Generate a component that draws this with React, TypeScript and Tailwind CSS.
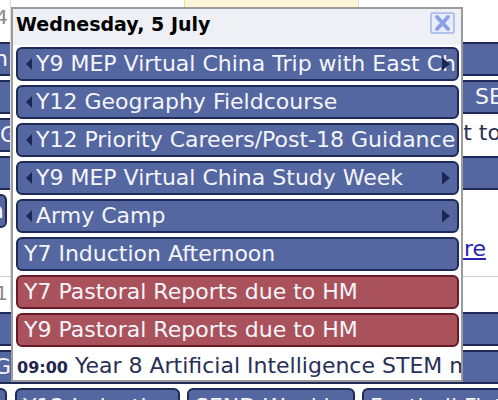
import React from "react";

type CalEvent = {
  title: string;
  tone: "blue" | "red";
  fromBefore?: boolean;
  goesAfter?: boolean;
};

const dayEvents: CalEvent[] = [
  { title: "Y9 MEP Virtual China Trip with East China", tone: "blue", fromBefore: true, goesAfter: true },
  { title: "Y12 Geography Fieldcourse", tone: "blue", fromBefore: true },
  { title: "Y12 Priority Careers/Post-18 Guidance", tone: "blue", fromBefore: true },
  { title: "Y9 MEP Virtual China Study Week", tone: "blue", fromBefore: true, goesAfter: true },
  { title: "Army Camp", tone: "blue", fromBefore: true, goesAfter: true },
  { title: "Y7 Induction Afternoon", tone: "blue" },
  { title: "Y7 Pastoral Reports due to HM", tone: "red" },
  { title: "Y9 Pastoral Reports due to HM", tone: "red" },
];

const blueBar =
  "h-[34px] border-2 border-[#1f2a58] bg-[#5567a1] text-[#f4f5fa] text-[22px] leading-[30px] overflow-hidden whitespace-nowrap flex items-center";

const EventBar: React.FC<{ ev: CalEvent }> = ({ ev }) => {
  const tone =
    ev.tone === "red"
      ? "bg-[#aa525c] border-[#6a1a27]"
      : "bg-[#5567a1] border-[#1f2a58]";
  return (
    <div
      className={`relative h-[34px] ml-[3px] mr-[2px] border-2 rounded-[6px] ${tone} flex items-center overflow-hidden whitespace-nowrap`}
    >
      {ev.fromBefore ? (
        <>
          <svg className="ml-[8px] shrink-0" width="6" height="12" viewBox="0 0 6 12">
            <path d="M6 0 L0 6 L6 12 Z" fill="#1c2653" />
          </svg>
          <span className="ml-[4px] text-[22px] leading-[30px] text-[#f4f5fa]">{ev.title}</span>
        </>
      ) : (
        <span className="ml-[6px] text-[22px] leading-[30px] text-[#f4f5fa]">{ev.title}</span>
      )}
      {ev.goesAfter && (
        <svg
          className="absolute right-[7px] top-1/2 -translate-y-1/2"
          width="8"
          height="13"
          viewBox="0 0 8 13"
        >
          <path d="M0 0 L8 6.5 L0 13 Z" fill="#1c2653" />
        </svg>
      )}
    </div>
  );
};

const DayPopup = () => (
  <div className="absolute left-[11px] top-[7px] w-[452px] h-[375px] border-2 border-[#9b9b9b] bg-white overflow-hidden">
    {/* header */}
    <div className="h-[36px] bg-[#eef0f5] flex items-start justify-between pl-[3px] pr-[6px]">
      <h2 className="pt-[4px] text-[19px] leading-[22px] font-bold text-black">
        Wednesday, 5 July
      </h2>
      <button className="mt-[3px] w-[25px] h-[22px]" aria-label="Close">
        <svg width="25" height="22" viewBox="0 0 25 22">
          <rect x="1" y="1" width="23" height="20" rx="1.5" fill="#e8edfb" stroke="#a3b5ea" strokeWidth="1.5" />
          <path d="M7 5 L18 17 M18 5 L7 17" stroke="#8aa1e4" strokeWidth="3.8" strokeLinecap="round" />
        </svg>
      </button>
    </div>

    <div className="flex flex-col gap-[4px] pt-[2px]">
      {dayEvents.map((ev) => (
        <EventBar key={ev.title} ev={ev} />
      ))}
    </div>

    <div className="mt-[4px] h-[30px] pl-[4px] flex items-baseline whitespace-nowrap overflow-hidden leading-[30px]">
      <span className="text-[16px] font-bold text-[#1f2650]">09:00</span>
      <span className="ml-[7px] text-[22px] text-[#283056]">Year 8 Artificial Intelligence STEM morning</span>
    </div>
  </div>
);

export default function App() {
  return (
    <div
      className="relative w-[498px] h-[400px] overflow-hidden bg-white"
      style={{ fontFamily: '"DejaVu Sans", Verdana, sans-serif' }}
    >
      {/* month grid behind the popup */}
      <div className="ml-[-164px] w-[870px]">
        {/* week 1 */}
        <div className="grid grid-cols-[repeat(5,174px)] h-[277px] border-b border-[#cfcfcf]">
          <div className="flex flex-col">
            <div className="h-[40px] pt-[5px] pr-[2px] text-right text-[20px] leading-[24px] text-[#8a8a8a]">4</div>
            <div className="flex flex-col gap-[4px] pt-[2px]">
              <div className={`${blueBar} justify-end pr-[2px] rounded-l-[6px] border-r-0`}>Trip with East Ch</div>
              <div className={`${blueBar} rounded-l-[6px] border-r-0`}></div>
              <div className={`${blueBar} justify-end rounded-l-[6px] border-r-0 -mr-[7px]`}>Careers G</div>
              <div className={`${blueBar} rounded-l-[6px] border-r-0`}></div>
              <div className={`${blueBar} justify-end pr-[1px] mr-[3px] rounded-[6px]`}>Y10 Drama</div>
            </div>
          </div>
          <div className="flex flex-col border-l border-[#dcdcdc]">
            <div className="h-[40px]"></div>
          </div>
          <div className="flex flex-col bg-[#fdf6d6] border-l border-[#ecd98f]">
            <div className="h-[40px]"></div>
          </div>
          <div className="flex flex-col border-l border-[#dcdcdc]">
            <div className="h-[40px]"></div>
            <div className="flex flex-col gap-[4px] pt-[2px]">
              <div className={`${blueBar} border-l-0`}></div>
              <div className={`${blueBar} border-l-0 pl-[116px]`}>SEND Review</div>
              <div className="h-[34px] pl-[66px] text-[22px] leading-[30px] whitespace-nowrap text-[#283056]">Visit to Museum</div>
              <div className={`${blueBar} h-[26px] border-l-0`}></div>
              <a className="mt-[42px] pl-[49px] text-[22px] leading-[26px] text-[#2323b4] underline whitespace-nowrap">3 more</a>
            </div>
          </div>
          <div></div>
        </div>

        {/* week 2 */}
        <div className="flex flex-col">
          <div className="grid grid-cols-[repeat(5,174px)] h-[33px]">
            <div className="pt-[4px] pr-[2px] text-right text-[20px] leading-[24px] text-[#8a8a8a]">11</div>
            <div className="border-l border-[#dcdcdc]"></div>
            <div className="border-l border-[#dcdcdc]"></div>
            <div className="border-l border-[#dcdcdc]"></div>
            <div></div>
          </div>
          <div className="flex flex-col gap-[4px] pt-[2px]">
            <div className={`${blueBar} rounded-[6px]`}></div>
            <div className={`${blueBar} rounded-[6px] pl-[156px]`}>GCSE Science Practicals</div>
            <div className="grid grid-cols-[repeat(5,174px)]">
              <div className={`${blueBar} mr-[3px] rounded-[6px]`}></div>
              <div className={`${blueBar} ml-[5px] mr-[4px] rounded-[6px] pl-[6px] items-start pt-[2px]`}>Y12 Induction</div>
              <div className={`${blueBar} ml-[3px] mr-[3px] rounded-[6px] pl-[6px] items-start pt-[2px]`}>SEND Weekly</div>
              <div className={`${blueBar} ml-[4px] rounded-l-[6px] border-r-0 pl-[6px] items-start pt-[2px]`}>Football Fixtures</div>
              <div className={`${blueBar} border-l-0`}></div>
            </div>
          </div>
        </div>
      </div>

      <DayPopup />
    </div>
  );
}
